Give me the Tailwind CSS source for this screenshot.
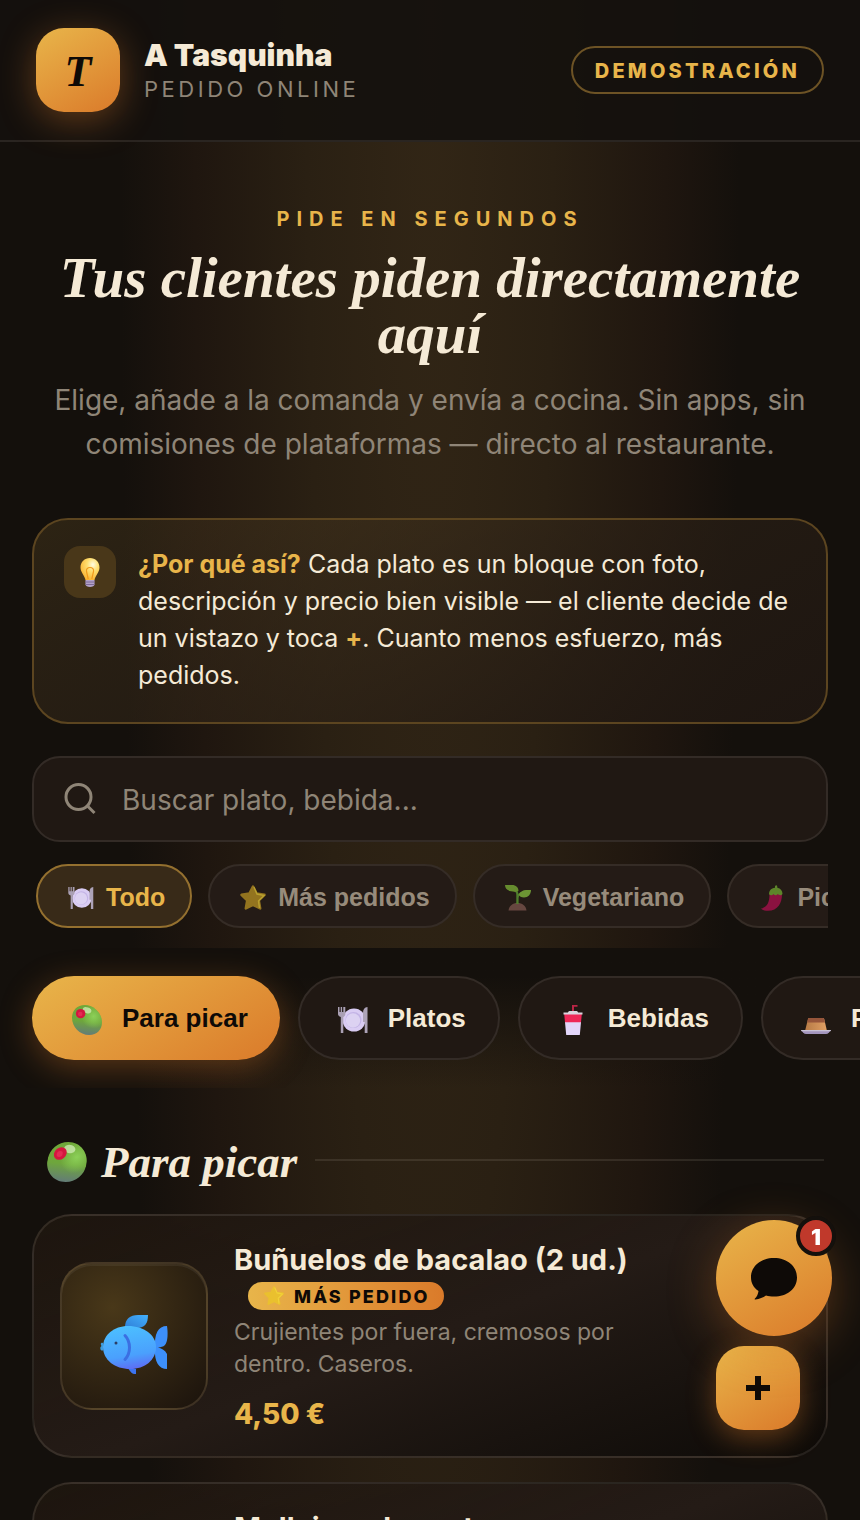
<!DOCTYPE html>
<html lang="es">
  <head>
    <meta charset="UTF-8" />
    <meta name="viewport" content="width=device-width, initial-scale=1.0" />
    <title>A Tasquinha - Pedido online</title>
    <script src="https://cdn.jsdelivr.net/npm/@tailwindcss/browser@4"></script>
    <style>
      body {
        font-family: "Inter", sans-serif;
      }
    </style>
  </head>
  <body
    class="min-h-screen overflow-x-hidden bg-[#14100c] bg-[radial-gradient(ellipse_310px_3400px_at_50%_0,#322616_0%,#2a2013_40%,#1f160f_76%,#14100c_100%)] text-[#f5ead6]"
  >
    <!-- Icons -->
    <svg class="absolute size-0" aria-hidden="true">
      <defs>
        <linearGradient id="oliveBody" x1="0.6" y1="0" x2="0.5" y2="1">
          <stop offset="0" stop-color="#6fa838" />
          <stop offset="0.55" stop-color="#6ea63c" />
          <stop offset="1" stop-color="#637b78" />
        </linearGradient>
        <radialGradient id="oliveShine" cx="0.72" cy="0.38" r="0.4">
          <stop offset="0" stop-color="#8cd058" />
          <stop offset="1" stop-color="#8cd058" stop-opacity="0" />
        </radialGradient>
        <linearGradient id="fishBody" x1="0.3" y1="0" x2="0.5" y2="1">
          <stop offset="0" stop-color="#4cc0ff" />
          <stop offset="0.7" stop-color="#4aa0fd" />
          <stop offset="1" stop-color="#5c6ff4" />
        </linearGradient>
        <linearGradient id="fishFin" x1="0" y1="1" x2="1" y2="0">
          <stop offset="0" stop-color="#2f7fd8" />
          <stop offset="1" stop-color="#43b0fb" />
        </linearGradient>
        <radialGradient id="bulbGlass" cx="0.65" cy="0.3" r="0.75">
          <stop offset="0" stop-color="#fffbe0" />
          <stop offset="0.4" stop-color="#ffdf70" />
          <stop offset="1" stop-color="#f9b130" />
        </radialGradient>
        <linearGradient id="flan" x1="0" y1="0" x2="1" y2="0">
          <stop offset="0" stop-color="#b67a45" />
          <stop offset="1" stop-color="#e0a065" />
        </linearGradient>
      </defs>

      <symbol id="olive" viewBox="0 0 40 40">
        <path d="M17 0C30 0 40 12 40 23C40 33 33 40 23 40C10 40 0 29 0 17C0 7 7 0 17 0Z" fill="url(#oliveBody)" />
        <path d="M17 0C30 0 40 12 40 23C40 33 33 40 23 40C10 40 0 29 0 17C0 7 7 0 17 0Z" fill="url(#oliveShine)" />
        <ellipse cx="20" cy="7" rx="6" ry="4" transform="rotate(20 20 7)" fill="#d3ecb8" opacity="0.75" />
        <circle cx="11.5" cy="11.5" r="6.3" fill="#d5163f" />
        <circle cx="11" cy="12" r="3" fill="#e8345c" opacity="0.7" />
      </symbol>

      <symbol id="plate" viewBox="0 0 30 26">
        <circle cx="16" cy="13" r="11.5" fill="#d9ccf3" />
        <circle cx="15.5" cy="13" r="8" fill="#c3b4e6" />
        <circle cx="15" cy="13.5" r="7.2" fill="#dcd2f2" />
        <path d="M0 0h1.5v5h1.2V0h1.4v5h1.2V0h2v7c0 1.5-.8 2.4-2 3v16H2.8V10C1 9.4 0 8.5 0 7Z" fill="#aaa0b4" />
        <path d="M29.5 0v26h-2.8V15h-1.7V6C25 2.5 26.5.2 29.5 0Z" fill="#ada3b8" />
      </symbol>

      <symbol id="star" viewBox="0 0 26 26">
        <path d="M13 1.5L16.6 8.6L24.5 9.8L18.8 15.4L20.2 23.4L13 19.8L5.8 23.4L7.2 15.4L1.5 9.8L9.4 8.6Z" stroke="currentColor" stroke-width="2.5" stroke-linejoin="round" fill="currentColor" />
        <path d="M14 2l3 7 7 1.5-5.5 5.5 1 7" stroke="#fff04a" stroke-opacity="0.35" stroke-width="1.5" fill="none" />
      </symbol>

      <symbol id="seedling" viewBox="0 0 26 26">
        <path d="M3.5 25.5C4 20.5 8 18 12.5 18S21 20.5 21.5 25.5Z" fill="#664740" />
        <path d="M11.3 19V10C11.3 7 10 6 8 6V4C12 4 13.2 6.5 13.5 9C15 7 17 6.5 19 7V9C15.5 8.8 13.6 10.5 13.6 13V19Z" fill="#4f7d2c" />
        <path d="M0 0H7C11 0 13.5 2.5 13.5 6C12 6.8 9 7 6 6.3C2 5.4 0 3 0 0Z" fill="#668c2e" />
        <path d="M26 5C26 9.5 23 12.5 19 12.5C16.5 12.5 14 11.5 13.8 9.5C15.5 6.5 18 5 21 5Z" fill="#6c9434" />
      </symbol>

      <symbol id="chili" viewBox="0 0 22 26">
        <path d="M8.5 9H21C21 18 17 25.8 7 25.8C3.5 25.8 1 25 0 23.5C6 22 8.5 18 8.5 9Z" fill="#8b1240" />
        <path d="M14 1c1.5-1.5 2.5-.5 2.3 1.8c3.5.7 5.2 3 5.2 6.2c-1.6 2-3.5 1-4.8 0c-1.3 2-3 1.5-4.2 0c-1.2 1.5-3 1.5-4.5.3C8 5.5 10 3.2 14 2.8Z" fill="#5d852a" />
      </symbol>

      <symbol id="cup" viewBox="0 0 20 30">
        <path d="M10 7V.8h4.500" stroke="#b92545" stroke-width="2" fill="none" />
        <path d="M2 17H18L16.8 30H3.2Z" fill="#e3d6fa" />
        <path d="M1.2 9H18.8L18 17.2H2Z" fill="#ee2858" />
        <path d="M5 7.5C5 6.5 6 6 7 6H13C14 6 15 6.5 15 7.5H19.5V9.6H.5V7.5Z" fill="#d9d4de" />
      </symbol>

      <symbol id="custard" viewBox="0 0 30 16">
        <path d="M7 1C7.2.3 7.5 0 8 0H22C22.5 0 23 .3 23.2 1L26 13H4Z" fill="url(#flan)" />
        <path d="M7 1C7.2.3 7.5 0 8 0H22C22.5 0 23 .3 23.2 1L24 4.5H6.2Z" fill="#96553a" />
        <path d="M0 12H30L28 14.5C27 15.5 26 16 25 16H5C4 16 3 15.5 2 14.5Z" fill="#a395bd" />
        <path d="M0 12H30L29.5 13.2H.5Z" fill="#c9c2d6" />
      </symbol>

      <symbol id="bulb" viewBox="0 0 20 30">
        <path d="M10 0C15.5 0 19.5 4 19.5 9.5C19.5 14.5 15.5 17 14.5 22H5.5C4.5 17 .5 14.5 .5 9.5C.5 4 4.5 0 10 0Z" fill="url(#bulbGlass)" />
        <path d="M8.2 21L6.5 13.5C6 11 7.5 9.5 10 9.5S14 11 13.5 13.5L11.8 21" stroke="#f09a1c" stroke-width="1.2" fill="none" />
        <path d="M5.5 22H14.5V26.5C14.5 28 12.5 29 10 29S5.5 28 5.5 26.5Z" fill="#b3a2c8" />
        <path d="M5.5 24H14.5M5.5 26.5H14.5" stroke="#7d6a98" stroke-width="1" />
      </symbol>

      <symbol id="fish" viewBox="0 0 68 60">
        <path d="M25 13C25 5 30 1 38 1H48C48 9 45 14 37 14Z" fill="url(#fishFin)" />
        <path d="M27 53L30 57C32 60 34 60 36 60V55Z" fill="#3c74f0" />
        <path d="M55 34C54 20 58 12 67 12C68 18 68 28 65 31C63 33 61 33 58 33.5C61 34 65 36 67 40V55C59 55 54 48 55 34Z" fill="#3d90fb" />
        <path d="M3 29C1 28 0 30 1.5 32C-.5 33 0 37 3 36.5Z" fill="#3d9de0" />
        <path d="M3 33C3 21 14 12 28 12C44 12 56 21 56 33C56 46 45 55 30 55C15 55 3 46 3 33Z" fill="url(#fishBody)" />
        <circle cx="16" cy="29" r="1.5" fill="#2c3e66" />
        <path d="M25 21.5C31 28 31 39 25 45.5" stroke="#3b6fe2" stroke-width="3" stroke-linecap="round" fill="none" />
      </symbol>
    </svg>

    <!-- Header -->
    <header
      class="flex items-center gap-6 border-b-2 border-[#2a2521] bg-[#14110d]/90 px-9 py-7"
    >
      <div
        class="flex size-[84px] items-center justify-center rounded-[28px] bg-linear-150 from-[#e8b54a] to-[#da7a2a] pt-1 font-['Liberation_Serif'] text-[44px] font-bold text-[#0e0a07] italic shadow-[0_8px_36px_rgba(218,122,42,0.4)]"
      >
        T
      </div>
      <div class="flex-1 pt-[2px]">
        <p class="text-[30px] leading-9 font-black">A Tasquinha</p>
        <p class="text-[22px] leading-8 tracking-[0.16em] text-[#8f8577]">
          PEDIDO ONLINE
        </p>
      </div>
      <span
        class="flex h-12 items-center rounded-full border-2 border-[#6d5325] px-[22px] pt-px text-[20px] font-extrabold tracking-[0.16em] text-[#e8b54a]"
        >DEMOSTRACIÓN</span
      >
    </header>

    <main>
      <!-- Hero -->
      <section class="px-9 pt-[63px] pb-[52px] text-center">
        <p class="text-[20px] leading-7 font-bold tracking-[7px] text-[#e8b54a]">
          PIDE EN SEGUNDOS
        </p>
        <h1
          class="mt-[17px] font-['Liberation_Serif'] text-[57px] leading-14 font-bold italic"
        >
          Tus clientes piden directamente aquí
        </h1>
        <p class="mt-4 text-[28px] leading-[44px] text-[#8f8577]">
          Elige, añade a la comanda y envía a cocina. Sin apps, sin comisiones
          de plataformas — directo al restaurante.
        </p>
      </section>

      <!-- Info -->
      <section class="px-8">
        <div
          class="flex gap-[22px] rounded-[36px] border-2 border-[#5c4520] bg-linear-150 from-[#e8b54a]/12 to-[#1e1611] px-[30px] pt-[26px] pb-7"
        >
          <div
            class="flex size-[52px] shrink-0 items-center justify-center rounded-2xl bg-[#493719] pt-[2px]"
          >
            <svg class="h-[30px] w-5"><use href="#bulb" /></svg>
          </div>
          <p class="text-[25px] leading-[37px]">
            <strong class="font-bold text-[#e8b54a]">¿Por qué así?</strong> Cada
            plato es un bloque con foto, descripción y precio bien visible — el
            cliente decide de un vistazo y toca
            <strong class="text-[#e8b54a]">+</strong>. Cuanto menos esfuerzo,
            más pedidos.
          </p>
        </div>
      </section>

      <!-- Search and filters -->
      <section class="px-8 pt-8 pb-5">
        <label
          class="flex h-[86px] items-center gap-[26px] rounded-[28px] border-2 border-[#332b26] bg-[#201813] px-[30px]"
        >
          <svg
            class="size-8 shrink-0 text-[#8f8577]"
            viewBox="0 0 32 32"
            fill="none"
            stroke="currentColor"
            stroke-width="3"
          >
            <circle cx="14.5" cy="14" r="12.5" />
            <path d="M23.5 23L30.5 30" />
          </svg>
          <input
            type="search"
            aria-label="Buscar"
            placeholder="Buscar plato, bebida..."
            class="w-full bg-transparent pt-[2px] text-[28px] outline-none placeholder:text-[#8f8577]"
          />
        </label>

        <div
          class="mt-[22px] flex gap-4 overflow-hidden pl-1 font-['Liberation_Sans'] text-[25px] font-bold whitespace-nowrap text-[#978b7b]"
        >
          <button
            class="flex h-16 shrink-0 items-center gap-3 rounded-full border-2 border-[#94702f] bg-[#382a18] pt-[3px] pr-[25px] pl-[30px] text-[#e8b54a]"
          >
            <svg class="h-[22px] w-[26px]"><use href="#plate" /></svg>Todo
          </button>
          <button
            class="flex h-16 shrink-0 items-center gap-3 rounded-full border-2 border-[#352c26] bg-[#241b16] pt-[3px] pr-[25px] pl-[30px]"
          >
            <svg class="size-[26px] text-[#93741f]"><use href="#star" /></svg>Más
            pedidos
          </button>
          <button
            class="flex h-16 shrink-0 items-center gap-3 rounded-full border-2 border-[#352c26] bg-[#241b16] pt-[3px] pr-[25px] pl-[30px]"
          >
            <svg class="size-[26px]"><use href="#seedling" /></svg>Vegetariano
          </button>
          <button
            class="flex h-16 shrink-0 items-center gap-3 rounded-full border-2 border-[#352c26] bg-[#241b16] pt-[3px] pr-[25px] pl-[30px]"
          >
            <svg class="size-[26px]"><use href="#chili" /></svg>Picante
          </button>
        </div>
      </section>

      <!-- Categories -->
      <nav
        class="flex gap-[18px] overflow-hidden bg-linear-to-b from-[#14100c] from-20% to-transparent px-8 py-7 font-['Liberation_Sans'] text-[26px] font-bold whitespace-nowrap"
      >
        <button
          class="flex h-[84px] shrink-0 items-center gap-5 rounded-full bg-linear-150 from-[#e8b54a] to-[#da7a2a] pr-8 pl-10 text-[#0e0a07] shadow-[0_8px_32px_rgba(218,122,42,0.35)]"
        >
          <svg class="mt-1 size-[30px]"><use href="#olive" /></svg>Para picar
        </button>
        <button
          class="flex h-[84px] shrink-0 items-center gap-5 rounded-full border-2 border-[#332b26] bg-[#201813] pr-8 pl-[38px]"
        >
          <svg class="mt-1 h-[26px] w-[30px]"><use href="#plate" /></svg>Platos
        </button>
        <button
          class="flex h-[84px] shrink-0 items-center gap-5 rounded-full border-2 border-[#332b26] bg-[#201813] pr-8 pl-[38px]"
        >
          <svg class="mt-1 size-[30px]"><use href="#cup" /></svg>Bebidas
        </button>
        <button
          class="flex h-[84px] shrink-0 items-center gap-5 rounded-full border-2 border-[#332b26] bg-[#201813] pr-8 pl-[38px]"
        >
          <svg class="mt-4 h-4 w-[30px]"><use href="#custard" /></svg>Postres
        </button>
      </nav>

      <!-- Dishes -->
      <section class="px-8 pt-12">
        <div class="flex items-center gap-[18px] pr-1 pl-[15px]">
          <h2
            class="flex items-center gap-[14px] font-['Liberation_Serif'] text-[45px] leading-[52px] font-bold italic"
          >
            <svg class="size-10 -skew-x-12 overflow-visible">
              <use href="#olive" /></svg
            >Para picar
          </h2>
          <div class="mb-1 h-[2px] flex-1 bg-[#f5ead6]/10"></div>
        </div>

        <div class="mt-[26px] flex flex-col gap-6">
          <article
            class="flex items-center gap-[26px] rounded-[40px] border-2 border-[#f5ead6]/10 bg-linear-160 from-[#20170f]/80 via-[#241b16] via-50% to-[#0e0b08] p-[26px]"
          >
            <div
              class="flex size-[148px] shrink-0 items-center justify-center rounded-[32px] border-2 border-[#f5d9a0]/15 bg-[radial-gradient(circle_at_35%_30%,#493819,#1a120c)] pt-4 shadow-[inset_0_2px_0_rgba(255,255,255,0.06)]"
            >
              <svg class="h-[60px] w-[68px]"><use href="#fish" /></svg>
            </div>
            <div class="flex-1">
              <h3 class="text-[29px] leading-9 font-bold">
                Buñuelos de bacalao (2 ud.)
              </h3>
              <span
                class="mt-1 ml-[14px] flex h-7 w-fit items-center gap-[10px] rounded-full bg-linear-to-r from-[#e8b54a] to-[#da7a2a] pr-[14px] pl-4 text-[18px] font-extrabold tracking-[0.12em] text-[#0e0a07]"
              >
                <svg class="size-5 text-[#eac02e]"><use href="#star" /></svg>MÁS
                PEDIDO
              </span>
              <p class="mt-[6px] max-w-[400px] text-[23px] leading-8 text-[#8f8577]">
                Crujientes por fuera, cremosos por dentro. Caseros.
              </p>
              <p class="mt-[18px] text-[28px] leading-8 font-extrabold text-[#e8b54a]">
                4,50 €
              </p>
            </div>
            <button
              aria-label="Añadir Buñuelos de bacalao"
              class="flex size-[84px] shrink-0 items-center justify-center self-end rounded-[28px] bg-linear-150 from-[#e8b54a] to-[#da7a2a] shadow-[0_8px_28px_rgba(218,122,42,0.4)]"
            >
              <svg class="size-6" viewBox="0 0 24 24" stroke="#0e0a07" stroke-width="6">
                <path d="M12 0V24M0 12H24" />
              </svg>
            </button>
          </article>

          <article
            class="flex h-[244px] items-center gap-[26px] rounded-[40px] border-2 border-[#f5ead6]/10 bg-linear-160 from-[#20170f]/80 via-[#241b16] via-50% to-[#0e0b08] p-[26px]"
          >
            <div
              class="size-[148px] shrink-0 rounded-[32px] border-2 border-[#f5d9a0]/15 bg-[radial-gradient(circle_at_35%_30%,#493819,#1a120c)]"
            ></div>
            <h3 class="flex-1 self-start text-[29px] leading-9 font-bold">
              Mollejas a la portuguesa
            </h3>
          </article>
        </div>
      </section>
    </main>

    <!-- Chat -->
    <button
      aria-label="Abrir chat"
      class="fixed right-7 bottom-[184px] flex size-[116px] items-center justify-center rounded-full bg-linear-150 from-[#e8b54a] to-[#da7a2a] pt-[2px] shadow-[0_12px_48px_rgba(218,122,42,0.35)]"
    >
      <svg class="h-[42px] w-[46px]" viewBox="0 0 46 42" fill="#0e0a07">
        <path d="M23 0C36 0 46 8 46 19.5S36 38.5 23 38.5C20 38.5 17.5 38.2 15 37.5C12 39.5 8.5 41 4.5 41.5C3.5 41.6 3.5 41 4 40.5C6 38.5 7 36 7.5 33C2.5 29.5 0 25 0 19.5C0 8 10 0 23 0Z" />
      </svg>
      <span
        class="absolute -top-1 -right-1 flex size-10 items-center justify-center rounded-full border-4 border-[#14100c] bg-[#c0392b] pt-[2px] text-[22px] font-black text-white"
        >1</span
      >
    </button>
  </body>
</html>
